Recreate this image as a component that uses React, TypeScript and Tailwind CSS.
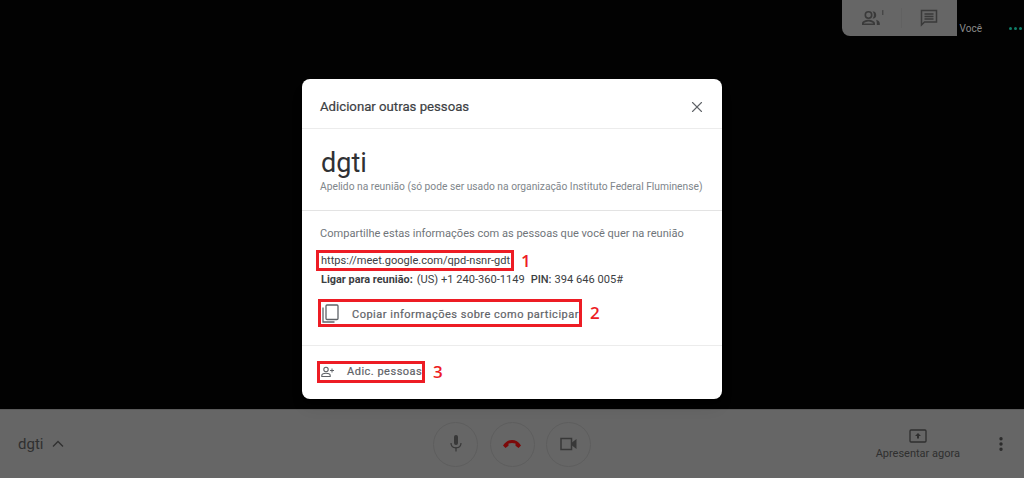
import { MoreVertical, X } from "lucide-react";

const RoundButton = ({ children }: { children: React.ReactNode }) => (
  <div className="flex h-[45px] w-[45px] items-center justify-center rounded-full border border-[#5e5e5e]">
    {children}
  </div>
);

const Marker = ({ n }: { n: number }) => (
  <span className="font-['Open_Sans',sans-serif] text-[17px] leading-[20px] font-semibold text-[#ed1c24]">{n}</span>
);

export default function App() {
  return (
    <div className="relative flex h-[478px] w-[1024px] flex-col overflow-hidden bg-black font-['Roboto',sans-serif]">
      {/* meeting area */}
      <div className="relative h-[409px] bg-[#020202]">
        <div className="flex justify-end">
          <span className="mt-[23px] mr-[27px] text-[10px] leading-[12px] text-[#8a8a8a]">Você</span>
          <div className="mt-[27px] mr-[2px] flex gap-[2px]">
            <i className="h-[3px] w-[3px] rounded-full bg-[#0f7d68]" />
            <i className="h-[3px] w-[3px] rounded-full bg-[#0f7d68]" />
            <i className="h-[3px] w-[3px] rounded-full bg-[#0f7d68]" />
          </div>
        </div>
        <div className="absolute top-0 left-[842px] flex h-[36px] w-[115px] items-center rounded-bl-[8px] bg-[#666666]">
          <div className="flex flex-1 justify-center border-r border-[#616161] pl-[3px]">
            <svg width="24" height="20" viewBox="0 0 24 20" fill="#3a3a3a">
              <circle cx="7.5" cy="7" r="3.2" fill="none" stroke="#3a3a3a" strokeWidth="1.6" />
              <path d="M1 17v-1.6C1 13 5 11.800 7.500 11.800S14 13 14 15.400V17H1zm1.700-1.600h9.600c-.3-1-2.800-2-4.800-2s-4.500 1-4.800 2z" />
              <path d="M11.500 3.500c2.300-.6 3.700 1.200 3.700 3.500s-1.400 4-3.700 3.500c1-1 1.400-2.200 1.400-3.500s-.4-2.600-1.400-3.500z" />
              <path d="M15 11.800c2 .4 3.800 1.600 3.800 3.600V17h-3v-1.600c0-1.500-.2-2.500-.8-3.600z" />
              <path d="M21 2.500l1.300-.6v5.100h-1V3.200z" />
            </svg>
          </div>
          <div className="flex flex-1 justify-center">
            <svg width="18" height="18" viewBox="0 0 18 18" fill="none">
              <path d="M1.500 1.500h15v11.500H4.500l-3 3z" stroke="#3a3a3a" strokeWidth="1.500" strokeLinejoin="miter" />
              <path d="M4.500 5h9M4.500 7.500h9M4.500 10h9" stroke="#3a3a3a" strokeWidth="1.400" />
            </svg>
          </div>
        </div>
      </div>

      {/* bottom bar */}
      <div className="relative flex h-[69px] items-center justify-between border-t border-[#5a5a5a] bg-[#666666]">
        <div className="flex w-[200px] items-center pl-[18px] text-[15px] text-[#303030]">
          <span>dgti</span>
          <svg className="ml-[9px]" width="12" height="8" viewBox="0 0 12 8" fill="none">
            <path d="M1 6.500l5-5 5 5" stroke="#303030" strokeWidth="1.300" />
          </svg>
        </div>
        <div className="flex gap-[11.500px]">
          <RoundButton>
            <svg width="14" height="20" viewBox="0 0 14 20" fill="#383838">
              <rect x="5" y="1" width="4" height="10" rx="2" />
              <path d="M2 9c0 3 2.200 4.800 5 4.800S12 12 12 9" fill="none" stroke="#383838" strokeWidth="1.200" />
              <rect x="6.400" y="13.500" width="1.200" height="4" />
            </svg>
          </RoundButton>
          <RoundButton>
            <svg width="20" height="10" viewBox="0 0 20 10" fill="#7c0909">
              <path d="M1 6.500C3.500 2.500 6.500 1 10 1s6.500 1.500 9 5.500L16.500 9 13.500 6.800V4.500C11.500 3.800 8.500 3.800 6.500 4.500v2.300L3.500 9z" />
            </svg>
          </RoundButton>
          <RoundButton>
            <svg width="18" height="14" viewBox="0 0 18 14" fill="none">
              <rect x="1" y="1.500" width="10.500" height="11" stroke="#383838" strokeWidth="1.500" />
              <path d="M12 5.500L16.500 2v10L12 8.500z" fill="#383838" />
            </svg>
          </RoundButton>
        </div>
        <div className="flex w-[200px] items-center justify-end">
          <div className="flex flex-col items-center text-[11px] leading-[13px] text-[#2f2f2f]">
            <svg className="mb-[4px]" width="18" height="14" viewBox="0 0 18 14" fill="none">
              <rect x="1" y="1" width="16" height="12" rx="1" stroke="#2f2f2f" strokeWidth="1.300" />
              <path d="M9 4l3 3h-2v2.500H8V7H6z" fill="#2f2f2f" />
            </svg>
            <span>Apresentar agora</span>
          </div>
          <MoreVertical className="mr-[14px] ml-[32px] text-[#2a2a2a]" size={18} strokeWidth={2.5} />
        </div>
      </div>

      {/* dialog */}
      <div className="absolute top-[79px] left-[302px] w-[420px] rounded-[8px] bg-white shadow-lg">
        <div className="flex h-[50px] items-center justify-between border-b border-[#ececec] pt-[6px] pr-[16px] pl-[18px]">
          <span className="text-[13.200px] text-[#3c4043] [-webkit-text-stroke:0.2px_#3c4043]">Adicionar outras pessoas</span>
          <X size={18} strokeWidth={1.5} className="text-[#5f6368]" />
        </div>
        <div className="h-[82px] border-b border-[#e3e3e3] pt-[19px] pl-[19px]">
          <div className="text-[27px] leading-[30px] text-[#303134]">dgti</div>
          <div className="mt-[2px] -ml-[1px] text-[10.260px] leading-[14px] text-[#80868b]">
            Apelido na reunião (só pode ser usado na organização Instituto Federal Fluminense)
          </div>
        </div>
        <div className="h-[135px] border-b border-[#ececec] pl-[14px]">
          <div className="pt-[16px] pl-[4px] text-[11.050px] leading-[14px] whitespace-nowrap text-[#70757a]">
            Compartilhe estas informações com as pessoas que você quer na reunião
          </div>
          <div className="mt-[9px] flex items-center gap-[7px]">
            <div className="h-[21px] w-[198px] border-[3px] border-[#ed1c24] pl-[2px] text-[11.050px] leading-[15px] whitespace-nowrap text-[#3c4043]">
              https://meet.google.com/qpd-nsnr-gdt
            </div>
            <Marker n={1} />
          </div>
          <div className="mt-[1px] pl-[5px] text-[11.100px] leading-[16px] whitespace-nowrap text-[#3c4043]">
            <span className="text-[10.900px] font-bold">Ligar para reunião:</span>
            <span className="ml-[4px]">(US) +1 240-360-1149</span>
            <span className="ml-[6px] text-[11px] font-medium">PIN:</span>
            <span className="ml-[3px]">394 646 005#</span>
          </div>
          <div className="mt-[11px] ml-[2px] flex items-center gap-[8px]">
            <div className="flex h-[28px] w-[264px] items-center border-[3px] border-[#ed1c24] pl-[1px]">
              <svg className="shrink-0" width="18" height="19" viewBox="0 0 18 19" fill="none">
                <path d="M1 3.500V18h11.500" stroke="#5f6368" strokeWidth="1.300" />
                <rect x="4" y="1" width="12" height="14.500" rx="1" stroke="#5f6368" strokeWidth="1.300" />
              </svg>
              <span className="mt-[4px] ml-[12px] text-[11px] tracking-[0.5px] whitespace-nowrap text-[#5f6368] [-webkit-text-stroke:0.2px_#5f6368]">
                Copiar informações sobre como participar
              </span>
            </div>
            <span className="mt-[2px]">
              <Marker n={2} />
            </span>
          </div>
        </div>
        <div className="flex h-[53px] items-center gap-[8px] pb-[2px] pl-[15px]">
          <div className="flex h-[22px] w-[108px] items-center border-[3px] border-[#ed1c24] pl-[1px]">
            <svg className="shrink-0" width="14" height="12" viewBox="0 0 14 12" fill="none">
              <circle cx="5" cy="3.500" r="2.200" stroke="#5f6368" strokeWidth="1.100" />
              <path d="M.8 10.500V9.500C.8 8 3 7.200 5 7.200s4.200.8 4.200 2.300v1z" stroke="#5f6368" strokeWidth="1.100" />
              <path d="M11 2.500v4M9 4.500h4" stroke="#5f6368" strokeWidth="1" />
            </svg>
            <span className="mt-[2px] ml-[12px] text-[11px] tracking-[0.5px] whitespace-nowrap text-[#5f6368] [-webkit-text-stroke:0.2px_#5f6368]">
              Adic. pessoas
            </span>
          </div>
          <Marker n={3} />
        </div>
      </div>
    </div>
  );
}
